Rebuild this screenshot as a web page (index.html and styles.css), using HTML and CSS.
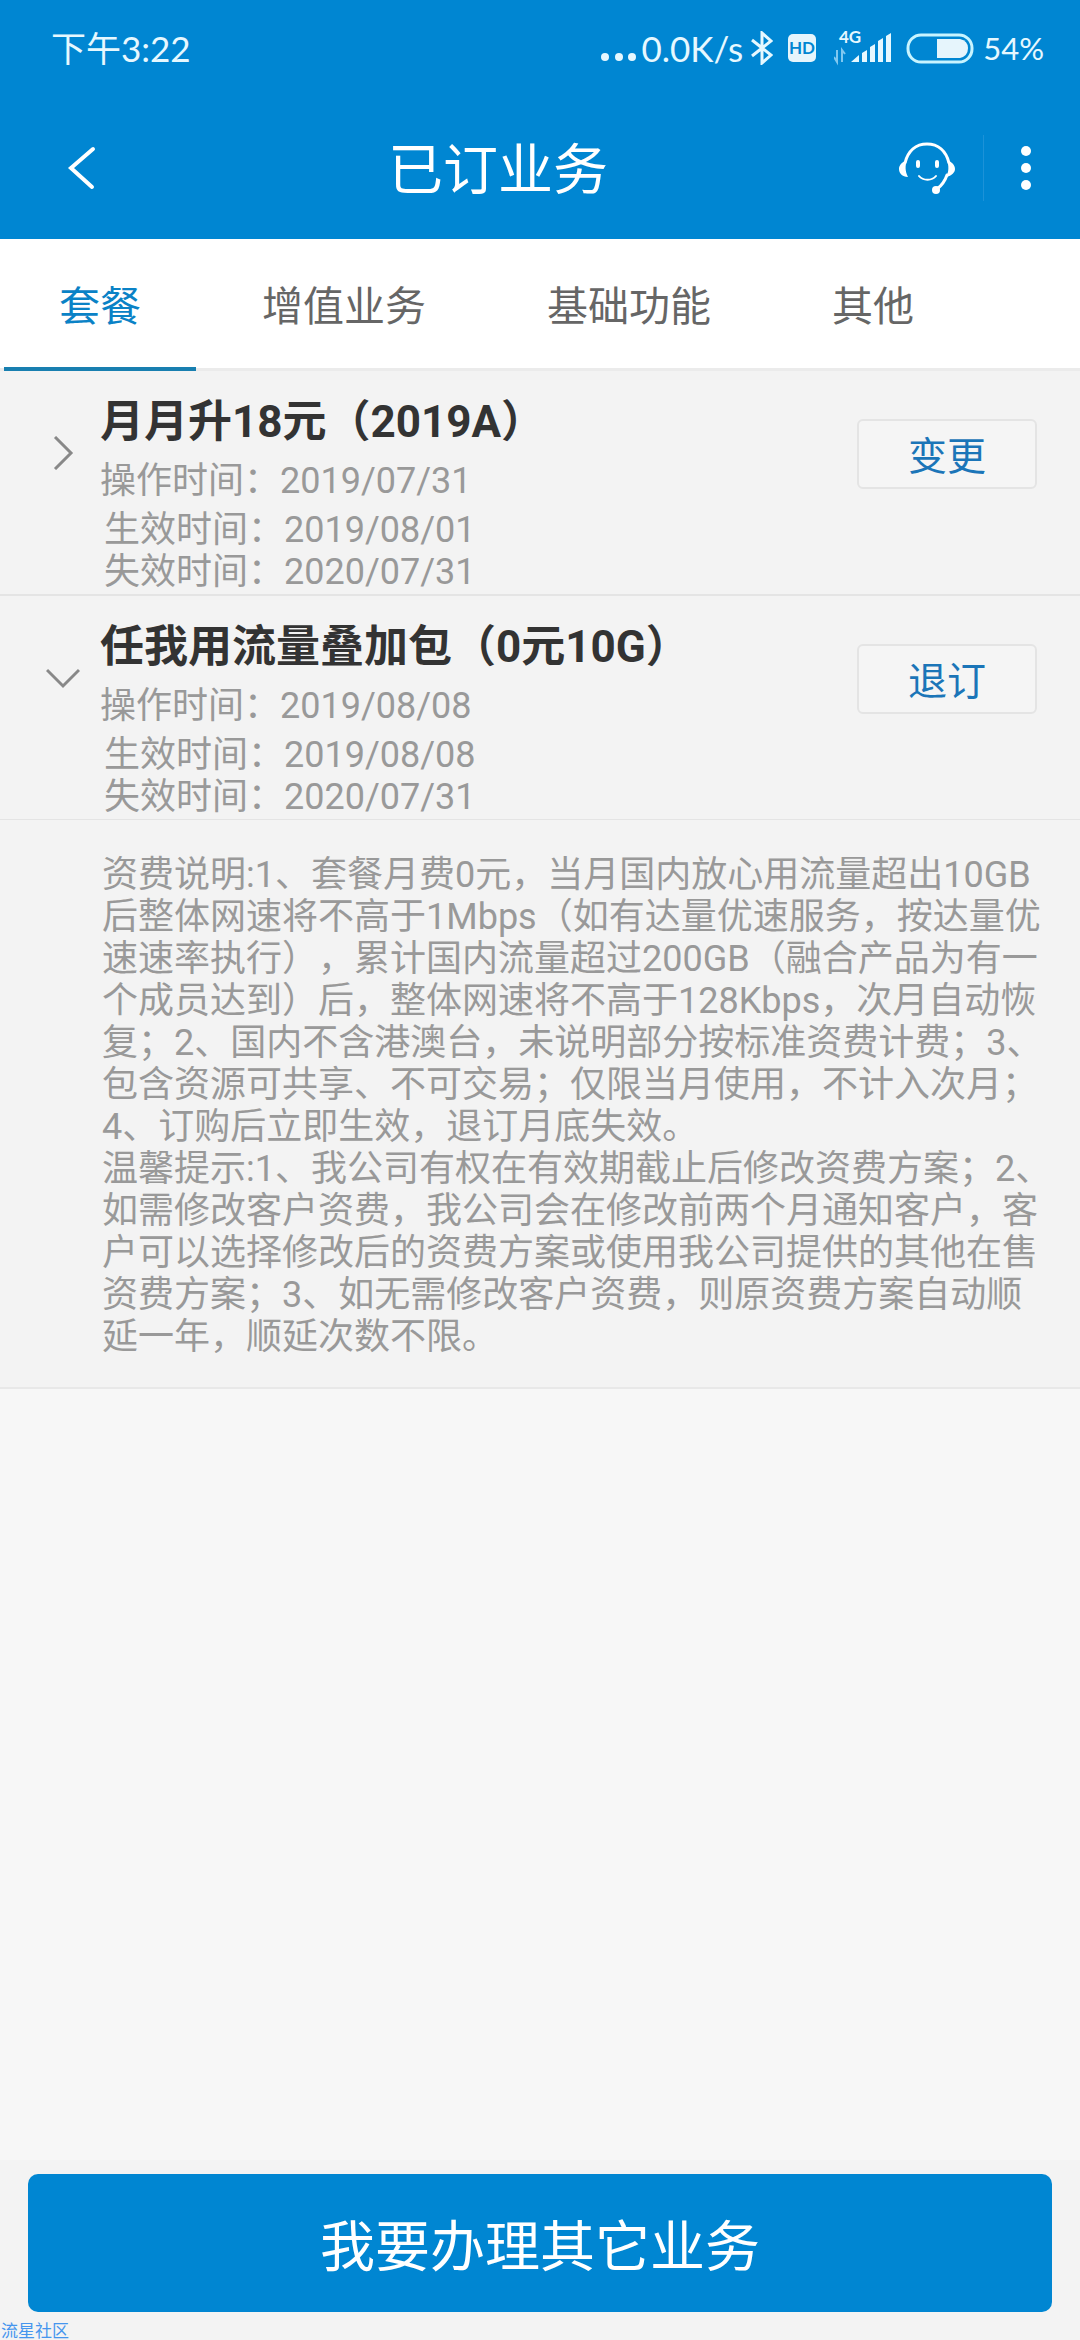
FILE: index.html
```
<!DOCTYPE html>
<html lang="zh-CN">
<head>
    <meta charset="UTF-8">
    <meta name="viewport" content="width=device-width, initial-scale=1.0">
    <title>已订业务</title>
    <link rel="stylesheet" href="styles.css">
</head>
<body>

    <div class="status-bar">
        <span class="time">下午3:22</span>
        <div class="status-icons">
            <svg class="icon-more" width="36" height="34" viewBox="0 0 36 34" fill="#e6f8ff">
                <circle cx="4" cy="26" r="4"/><circle cx="18" cy="26" r="4"/><circle cx="31" cy="26" r="4"/>
            </svg>
            <span class="speed">0.0K/s</span>
            <svg class="icon-bt" width="22" height="34" viewBox="0 0 22 34" fill="none" stroke="#e6f8ff" stroke-width="3">
                <path d="M1 9 L20 24 L11 32 V2 L20 10 L1 25"/>
            </svg>
            <svg class="icon-hd" width="28" height="28" viewBox="0 0 28 28">
                <rect width="28" height="28" rx="5" fill="#e6f5fc"/>
                <text x="14" y="20" text-anchor="middle" class="hd-text">HD</text>
            </svg>
            <svg class="icon-signal" width="58" height="42" viewBox="0 -4 58 42" fill="#e6f8ff">
                <text x="5" y="12" class="net-text">4G</text>
                <path d="M0 26 L3 31 V19 M8 31 V19 L11 23" fill="none" stroke="#7fc8f0" stroke-width="2"/>
                <path d="M17 31 L25 24 V31 Z M28 22 L33 19 V31 H28 Z M36 16 L41 13 V31 H36 Z M44 10 L49 7 V31 H44 Z M52 5 L57 2 V31 H52 Z"/>
            </svg>
            <svg class="icon-battery" width="68" height="31" viewBox="0 0 68 31">
                <rect x="2" y="2" width="64" height="27" rx="13" fill="none" stroke="#c8f4ff" stroke-width="3"/>
                <path d="M31 6 H54 Q62 8 62 15 Q62 23 54 25 H31 Z" fill="#e6f5fc"/>
            </svg>
            <span class="percent">54%</span>
        </div>
    </div>

    <header class="nav-bar">
        <button class="nav-btn back" aria-label="返回">
            <svg width="30" height="44" viewBox="0 0 30 44" fill="none" stroke="#fff" stroke-width="4" stroke-linecap="round">
                <path d="M26 3 L4 22 L25 41"/>
            </svg>
        </button>
        <h1>已订业务</h1>
        <button class="nav-btn service" aria-label="客服">
            <svg width="58" height="54" viewBox="0 0 58 54" fill="none" stroke="#fff" stroke-linecap="round">
                <path d="M7 22 C10 10 18 3 29 3 C40 3 48 10 51 22" stroke-width="3"/>
                <path d="M9 19 C7 25 7 30 10 36 C4 36 1 32 1 28 C1 24 4 21 9 19 Z M49 19 C51 25 51 31 48 36 C54 35 57 31 57 28 C57 24 54 21 49 19 Z" fill="#fff" stroke="none"/>
                <path d="M49 34 C47 40 43 45 39 48" stroke-width="3"/>
                <circle cx="38" cy="49" r="4" fill="#fff" stroke="none"/>
                <path d="M20 21 V25 M39 21 V25" stroke-width="4"/>
                <path d="M21 35 C25 40 34 40 38 35" stroke-width="2"/>
            </svg>
        </button>
        <span class="nav-line"></span>
        <button class="nav-btn more" aria-label="更多">
            <svg width="10" height="44" viewBox="0 0 10 44" fill="#fff">
                <circle cx="5" cy="5" r="5"/><circle cx="5" cy="22" r="5"/><circle cx="5" cy="39" r="5"/>
            </svg>
        </button>
    </header>

    <nav class="tabs">
        <button class="tab active">套餐</button>
        <button class="tab">增值业务</button>
        <button class="tab">基础功能</button>
        <button class="tab">其他</button>
    </nav>

    <main class="list">
        <section class="item">
            <button class="toggle" aria-label="展开">
                <svg width="34" height="34" viewBox="0 0 34 34" fill="none" stroke="#888" stroke-width="3">
                    <path d="M9 1 L25 17 L9 33"/>
                </svg>
            </button>
            <div class="info">
                <h2>月月升18元（2019A）</h2>
                <p class="op-time">操作时间：2019/07/31</p>
                <div class="dates">
                    <p>生效时间：2019/08/01</p>
                    <p>失效时间：2020/07/31</p>
                </div>
            </div>
            <button class="action">变更</button>
        </section>

        <section class="item open">
            <button class="toggle" aria-label="收起">
                <svg width="34" height="34" viewBox="0 0 34 34" fill="none" stroke="#888" stroke-width="3">
                    <path d="M1 9 L17 25 L33 9"/>
                </svg>
            </button>
            <div class="info">
                <h2>任我用流量叠加包（0元10G）</h2>
                <p class="op-time">操作时间：2019/08/08</p>
                <div class="dates">
                    <p>生效时间：2019/08/08</p>
                    <p>失效时间：2020/07/31</p>
                </div>
            </div>
            <button class="action">退订</button>
        </section>

        <div class="detail">
            <p>资费说明:1、套餐月费0元，当月国内放心用流量超出10GB后整体网速将不高于1Mbps（如有达量优速服务，按达量优速速率执行），累计国内流量超过200GB（融合产品为有一个成员达到）后，整体网速将不高于128Kbps，次月自动恢复；2、国内不含港澳台，未说明部分按标准资费计费；3、包含资源可共享、不可交易；仅限当月使用，不计入次月；4、订购后立即生效，退订月底失效。</p>
            <p>温馨提示:1、我公司有权在有效期截止后修改资费方案；2、如需修改客户资费，我公司会在修改前两个月通知客户，客户可以选择修改后的资费方案或使用我公司提供的其他在售资费方案；3、如无需修改客户资费，则原资费方案自动顺延一年，顺延次数不限。</p>
        </div>
    </main>

    <footer class="bottom-bar">
        <button class="submit">我要办理其它业务</button>
        <span class="mark">流星社区</span>
    </footer>

</body>
</html>
```
FILE: styles.css
```
* {
    box-sizing: border-box;
}
body {
    margin: 0;
    min-height: 100vh;
    display: flex;
    flex-direction: column;
    background: #f7f7f7;
    font-family: Roboto, "Noto Sans CJK SC", sans-serif;
    text-spacing-trim: space-all;
}
h1, h2, p {
    margin: 0;
}
button {
    margin: 0;
    padding: 0;
    border: none;
    background: none;
    font-family: inherit;
    cursor: pointer;
}
svg {
    display: block;
}

/* status bar */
.status-bar {
    display: flex;
    justify-content: space-between;
    align-items: center;
    height: 96px;
    padding: 0 36px 0 51px;
    background: #0086d2;
    color: #e6f8ff;
    font-family: Lato, "Noto Sans CJK SC", sans-serif;
    font-size: 35px;
}
.time {
    padding-bottom: 4px;
}
.status-icons {
    display: flex;
    align-items: center;
}
.speed {
    margin: 0 8px 0 4px;
}
.icon-hd {
    margin: 0 18px 0 15px;
}
.icon-battery {
    margin: 0 9px 0 14px;
}
.percent {
    font-size: 31px;
}
.hd-text {
    fill: #0086d2;
    font-size: 17px;
    font-weight: bold;
}
.net-text {
    font-size: 17px;
    font-weight: bold;
}

/* title bar */
.nav-bar {
    display: flex;
    align-items: center;
    height: 143px;
    background: #0086d2;
    color: #fff;
}
.nav-btn {
    display: flex;
    justify-content: center;
}
.back {
    width: 98px;
    padding-left: 67px;
    justify-content: flex-start;
}
.nav-bar h1 {
    flex: 1;
    padding-top: 4px;
    font-size: 55px;
    font-weight: 400;
    line-height: 72px;
    text-align: center;
}
.service {
    width: 85px;
    justify-content: flex-start;
}
.nav-line {
    width: 1px;
    height: 66px;
    background: #1c92d8;
}
.more {
    width: 96px;
    padding-right: 12px;
}

/* tabs */
.tabs {
    display: flex;
    gap: 11px;
    height: 132px;
    padding-left: 4px;
    background: #fff;
    box-shadow: inset 0 -3px #ebebeb;
}
.tab {
    padding: 0 55px;
    border-bottom: 4px solid transparent;
    color: #666;
    font-size: 41px;
}
.tab.active {
    border-bottom-color: #187fb0;
    color: #0a82c6;
}

/* list */
.list {
    flex: 1;
}
.item {
    display: flex;
    align-items: flex-start;
    padding-right: 43px;
    border-bottom: 2px solid #e4e4e4;
    background: #f3f3f3;
}
.item.open {
    border-bottom-width: 1px;
}
.toggle {
    width: 100px;
    padding: 65px 0 0 46px;
}
.info {
    flex: 1;
    padding: 24px 0 1px;
    color: #999;
    font-size: 36px;
    line-height: 42px;
}
.info h2 {
    color: #333;
    font-size: 44px;
    font-weight: bold;
    line-height: 54px;
}
.op-time {
    margin: 11px 0 7px;
}
.dates {
    padding-left: 4px;
}
.action {
    width: 180px;
    height: 70px;
    margin-top: 48px;
    padding-bottom: 3px;
    border: 2px solid #e4e4e4;
    border-radius: 6px;
    background: #f5f5f5;
    color: #1b75b8;
    font-size: 39px;
}
.detail {
    padding: 34px 27px 29px 102px;
    border-bottom: 2px solid #e8e8e8;
    background: #f3f3f3;
    color: #999;
    font-size: 36px;
    line-height: 42px;
}

/* bottom button */
.bottom-bar {
    display: flex;
    flex-direction: column;
    padding: 14px 0 0;
    background: #f3f3f3;
}
.submit {
    height: 138px;
    margin: 0 28px;
    padding-bottom: 3px;
    border-radius: 10px;
    background: #0086d2;
    color: #fff;
    font-size: 55px;
}
.mark {
    padding: 10px 0 0 1px;
    color: #4696ee;
    font-size: 17px;
    line-height: 18px;
}
```
